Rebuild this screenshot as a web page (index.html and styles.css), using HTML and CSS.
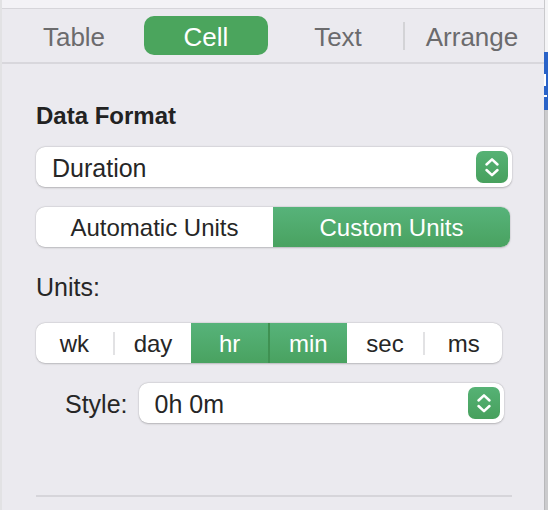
FILE: index.html
```html
<!DOCTYPE html>
<html>
<head>
<meta charset="utf-8">
<link rel="stylesheet" href="styles.css">
</head>
<body>
<div class="app">
  <div class="edge-left"></div>
  <div class="panel">
    <div class="topstrip"></div>
    <nav class="tabs">
      <div class="tab">Table</div>
      <div class="tab tab-gap active">Cell</div>
      <div class="tab tab-gap">Text</div>
      <div class="tab-sep"></div>
      <div class="tab">Arrange</div>
    </nav>
    <div class="content">
      <h2 class="title">Data Format</h2>
      <div class="popup popup-format">
        <span class="popup-value">Duration</span>
        <span class="stepper">
          <svg width="32" height="32" viewBox="0 0 32 32"><path d="M10.5 13.5 L16 8.3 L21.5 13.5 M10.5 19 L16 24.2 L21.5 19" fill="none" stroke="#fff" stroke-width="2.5" stroke-linecap="round" stroke-linejoin="round"/></svg>
        </span>
      </div>
      <div class="seg seg-mode">
        <div class="seg-item">Automatic Units</div>
        <div class="seg-item on">Custom Units</div>
      </div>
      <div class="label">Units:</div>
      <div class="seg seg-units">
        <div class="seg-item">wk</div>
        <i class="sep"></i>
        <div class="seg-item">day</div>
        <div class="seg-item on">hr</div>
        <i class="sep sep-on"></i>
        <div class="seg-item on">min</div>
        <div class="seg-item">sec</div>
        <i class="sep"></i>
        <div class="seg-item">ms</div>
      </div>
      <div class="style-row">
        <span class="style-label">Style:</span>
        <div class="popup popup-style">
          <span class="popup-value">0h 0m</span>
          <span class="stepper">
            <svg width="32" height="32" viewBox="0 0 32 32"><path d="M10.5 13.5 L16 8.3 L21.5 13.5 M10.5 19 L16 24.2 L21.5 19" fill="none" stroke="#fff" stroke-width="2.5" stroke-linecap="round" stroke-linejoin="round"/></svg>
          </span>
        </div>
      </div>
      <div class="divider"></div>
    </div>
  </div>
  <div class="scroll">
    <div class="scroll-top"></div>
    <div class="scroll-thumb">
      <i class="thumb-mark"></i>
      <i class="thumb-dash"></i>
    </div>
    <div class="scroll-rest"></div>
  </div>
</div>
</body>
</html>
```
FILE: styles.css
```css
html, body {
  margin: 0;
  padding: 0;
}
body {
  width: 548px;
  height: 510px;
  overflow: hidden;
  background: #ebeaef;
  font-family: "Liberation Sans", Arial, sans-serif;
  color: #262626;
}
.app {
  display: flex;
  height: 510px;
}
.edge-left {
  flex: none;
  width: 2px;
  background: #e2e2e4;
}
.panel {
  flex: 1;
  min-width: 0;
  background: #ebeaef;
}
.topstrip {
  height: 8px;
  background: #f3f2f6;
  border-bottom: 1px solid #d6d5da;
}
.tabs {
  height: 53px;
  display: flex;
  align-items: center;
  padding-left: 10px;
  border-bottom: 2px solid #d8d7dc;
}
.tab {
  flex: none;
  width: 124px;
  height: 39px;
  box-sizing: border-box;
  padding-top: 3px;
  display: flex;
  align-items: center;
  justify-content: center;
  font-size: 26px;
  color: #6b6b6d;
  border-radius: 10px;
}
.tab-gap {
  margin-left: 8px;
}
.tab.active {
  background: #4ba55d;
  color: #fff;
}
.tab-sep {
  flex: none;
  width: 2px;
  height: 28px;
  background: #d3d3d6;
  margin: 0 5px 0 3px;
}
.content {
  padding: 38px 32px 0 34px;
}
.title {
  margin: 0;
  font-size: 24px;
  font-weight: 700;
  line-height: 28px;
  color: #222;
}
.popup {
  height: 40px;
  box-sizing: border-box;
  background: #fff;
  border-radius: 9px;
  box-shadow: 0 0.5px 2px rgba(0, 0, 0, 0.22), 0 0 0 0.5px rgba(0, 0, 0, 0.05);
  display: flex;
  align-items: center;
  padding: 0 4px 0 16px;
  font-size: 25px;
  color: #262626;
}
.popup-format {
  margin-top: 17px;
}
.popup-value {
  flex: 1;
  padding-top: 2px;
}
.stepper {
  flex: none;
  width: 32px;
  height: 32px;
  border-radius: 7px;
  background: linear-gradient(#56b275, #47a05d);
  display: flex;
}
.seg {
  height: 40px;
  display: flex;
  align-items: stretch;
  background: #fff;
  border-radius: 9px;
  overflow: hidden;
  box-shadow: 0 0.5px 2px rgba(0, 0, 0, 0.2), 0 0 0 0.5px rgba(0, 0, 0, 0.05);
  font-size: 24px;
  color: #262626;
}
.seg-mode {
  margin-top: 20px;
  margin-right: 2px;
}
.seg-item {
  flex: 1;
  box-sizing: border-box;
  padding-top: 2px;
  display: flex;
  align-items: center;
  justify-content: center;
}
.seg-item.on {
  background: linear-gradient(#57b37a, #49a260);
  color: #fff;
}
.sep {
  flex: none;
  width: 2px;
  height: 23px;
  align-self: center;
  background: #e2e2e4;
}
.sep.sep-on {
  height: auto;
  align-self: stretch;
  background: #3f9152;
}
.label {
  margin-top: 25px;
  font-size: 25px;
  line-height: 30px;
  color: #262626;
}
.seg-units {
  margin-top: 21px;
  margin-right: 10px;
}
.style-row {
  margin-top: 20px;
  margin-right: 8px;
  padding-left: 29px;
  display: flex;
  align-items: center;
  gap: 11px;
}
.style-label {
  font-size: 25px;
  padding-top: 2px;
  color: #262626;
}
.popup-style {
  flex: 1;
}
.divider {
  margin-top: 72px;
  height: 2px;
  background: #d6d5da;
}
.scroll {
  flex: none;
  width: 4px;
  display: flex;
  flex-direction: column;
}
.scroll-top {
  height: 52px;
  box-sizing: border-box;
  background: #f4f4f6;
  border-left: 1px solid #c9c9cc;
}
.scroll-thumb {
  height: 58px;
  background: #2a63c8;
  display: flex;
  flex-direction: column;
  align-items: flex-start;
}
.thumb-mark {
  margin-top: 22px;
  width: 2px;
  height: 12px;
  background: #fff;
}
.thumb-dash {
  margin-top: 9px;
  width: 3px;
  height: 2px;
  background: #fff;
}
.scroll-rest {
  flex: 1;
  box-sizing: border-box;
  background: #cbcbcd;
  border-left: 1px solid #b8b8ba;
}
```
